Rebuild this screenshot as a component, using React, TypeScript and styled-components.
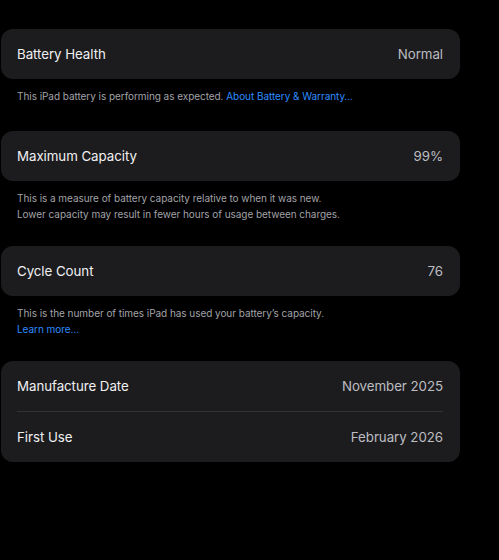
import styled, { createGlobalStyle } from "styled-components";

const GlobalStyle = createGlobalStyle`
  html, body {
    margin: 0;
    padding: 0;
    background: #000;
  }

  body {
    font-family: Inter, "Liberation Sans", Arial, sans-serif;
    -webkit-font-smoothing: antialiased;
  }
`;

const Page = styled.div`
  width: 460px;
  min-height: 560px;
  padding: 29px 0 0 1px;
  box-sizing: border-box;
  display: flex;
  flex-direction: column;
`;

const Card = styled.div`
  background: #1c1c1e;
  border-radius: 12px;
  padding: 0 17px 0 16px;
  display: flex;
  flex-direction: column;
`;

const Row = styled.div<{ $divider?: boolean }>`
  height: 50px;
  display: flex;
  align-items: center;
  justify-content: space-between;
  border-bottom: ${({ $divider }) => ($divider ? "1px solid #333336" : "none")};
`;

const Label = styled.span`
  color: #f0f0f2;
  font-size: 13.3px;
  letter-spacing: -0.05px;
`;

const Value = styled.span`
  color: #bdbdc2;
  font-size: 13.3px;
  letter-spacing: -0.05px;
`;

const Footnote = styled.p<{ $short?: boolean }>`
  margin: 0;
  padding: 9px 16px ${({ $short }) => ($short ? "27px" : "24px")} 16px;
  color: #a2a2a8;
  font-size: 10px;
  line-height: 16px;
  letter-spacing: -0.05px;

  & > a {
    color: #2f8cff;
    text-decoration: none;
  }
`;

export default function App(): JSX.Element {
  return (
    <>
      <GlobalStyle />
      <Page>
        <Card>
          <Row>
            <Label>Battery Health</Label>
            <Value>Normal</Value>
          </Row>
        </Card>
        <Footnote $short>
          This iPad battery is performing as expected.{" "}
          <a href="#">About Battery &amp; Warranty…</a>
        </Footnote>

        <Card>
          <Row>
            <Label>Maximum Capacity</Label>
            <Value>99%</Value>
          </Row>
        </Card>
        <Footnote>
          This is a measure of battery capacity relative to when it was new.
          <br />
          Lower capacity may result in fewer hours of usage between charges.
        </Footnote>

        <Card>
          <Row>
            <Label>Cycle Count</Label>
            <Value>76</Value>
          </Row>
        </Card>
        <Footnote>
          This is the number of times iPad has used your battery’s capacity.
          <br />
          <a href="#">Learn more…</a>
        </Footnote>

        <Card>
          <Row $divider>
            <Label>Manufacture Date</Label>
            <Value>November 2025</Value>
          </Row>
          <Row>
            <Label>First Use</Label>
            <Value>February 2026</Value>
          </Row>
        </Card>
      </Page>
    </>
  );
}
